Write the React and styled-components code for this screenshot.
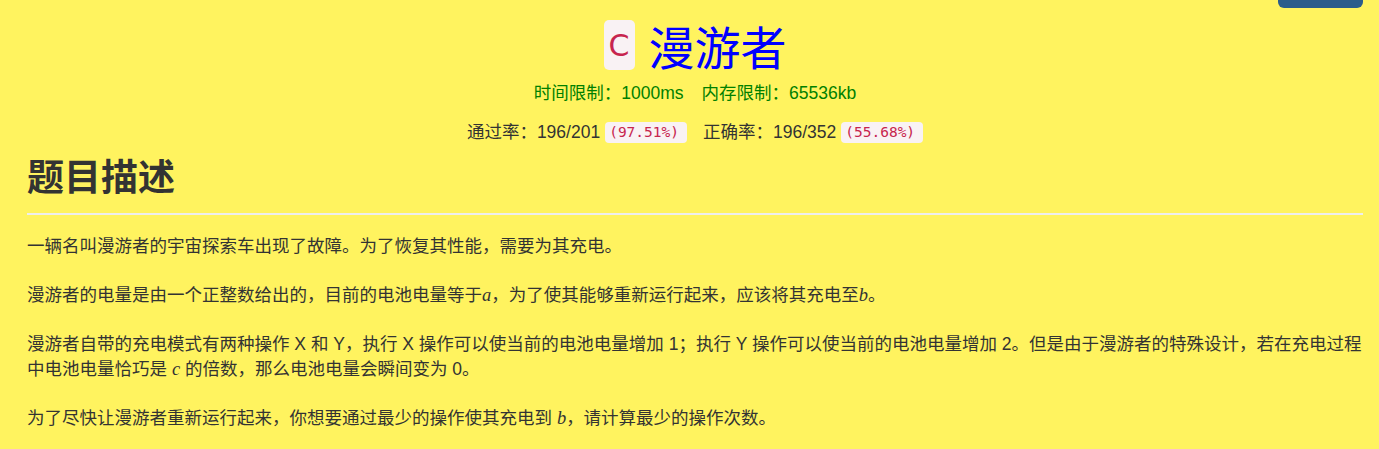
import React from "react";
import styled, { createGlobalStyle } from "styled-components";

const Global = createGlobalStyle`
  html, body { margin: 0; padding: 0; background: #fff35f; }
  body {
    font-family: "Liberation Sans", "Noto Sans CJK SC", sans-serif;
    color: #333;
  }
`;

const Page = styled.div`
  position: relative;
  padding: 0 16px 0 27px;
  min-height: 449px;
  box-sizing: border-box;
`;

const TopButton = styled.div`
  position: absolute;
  top: 0;
  right: 16px;
  width: 85px;
  height: 8px;
  background: #2c5d8b;
  border-radius: 0 0 6px 6px;
`;

const Header = styled.div`
  display: flex;
  flex-direction: column;
  align-items: center;
  padding-top: 20px;
`;

const TitleRow = styled.div`
  display: flex;
  align-items: center;
  gap: 14px;
  height: 50px;
`;

const Badge = styled.code`
  display: inline-flex;
  align-items: center;
  justify-content: center;
  width: 31px;
  height: 50px;
  border-radius: 5px;
  background: #f9f2f4;
  color: #c7254e;
  font-family: "DejaVu Sans", sans-serif;
  font-size: 30px;
`;

const TitleText = styled.span`
  font-family: "Noto Sans CJK SC", sans-serif;
  font-size: 46px;
  color: #0000ff;
  line-height: 50px;
`;

const Limits = styled.div`
  margin-top: 12px;
  color: #008000;
  font-size: 17.5px;
  line-height: 22px;
  display: flex;
  gap: 18px;
`;

const Stats = styled.div`
  margin-top: 17px;
  font-size: 17.5px;
  line-height: 22px;
  display: flex;
  align-items: center;
  gap: 16px;
`;

const Stat = styled.span`
  display: inline-flex;
  align-items: center;
  gap: 5px;
`;

const Percent = styled.code`
  font-family: "DejaVu Sans Mono", monospace;
  font-size: 14.5px;
  color: #c7254e;
  background: #f9f2f4;
  border-radius: 4px;
  padding: 2px 8px 2px 4px;
  line-height: 17px;
`;

const Heading = styled.h1`
  margin: 6px 0 0;
  font-family: "Noto Sans CJK SC", sans-serif;
  font-size: 37px;
  font-weight: 700;
  line-height: 52px;
  padding-bottom: 12px;
  border-bottom: 2px solid #eeeeee;
`;

const Para = styled.p`
  margin: 19px 0 24px;
  font-size: 17.5px;
  line-height: 25px;
  font-family: "Liberation Sans", "Noto Sans CJK SC", sans-serif;
`;

const M = styled.i`
  font-family: "Liberation Serif", serif;
  font-size: 18.5px;
  line-height: 1;
`;

export default function App() {
  return (
    <>
      <Global />
      <Page>
        <TopButton />
        <Header>
          <TitleRow>
            <Badge>C</Badge>
            <TitleText>漫游者</TitleText>
          </TitleRow>
          <Limits>
            <span>时间限制：1000ms</span>
            <span>内存限制：65536kb</span>
          </Limits>
          <Stats>
            <Stat>
              通过率：196/201 <Percent>(97.51%)</Percent>
            </Stat>
            <Stat>
              正确率：196/352 <Percent>(55.68%)</Percent>
            </Stat>
          </Stats>
        </Header>
        <Heading>题目描述</Heading>
        <Para>一辆名叫漫游者的宇宙探索车出现了故障。为了恢复其性能，需要为其充电。</Para>
        <Para>
          漫游者的电量是由一个正整数给出的，目前的电池电量等于<M>a</M>，为了使其能够重新运行起来，应该将其充电至<M>b</M>。
        </Para>
        <Para>
          漫游者自带的充电模式有两种操作 X 和 Y，执行 X 操作可以使当前的电池电量增加 1；执行 Y 操作可以使当前的电池电量增加 2。但是由于漫游者的特殊设计，若在充电过程中电池电量恰巧是 <M>c</M> 的倍数，那么电池电量会瞬间变为 0。
        </Para>
        <Para>
          为了尽快让漫游者重新运行起来，你想要通过最少的操作使其充电到 <M>b</M>，请计算最少的操作次数。
        </Para>
      </Page>
    </>
  );
}
